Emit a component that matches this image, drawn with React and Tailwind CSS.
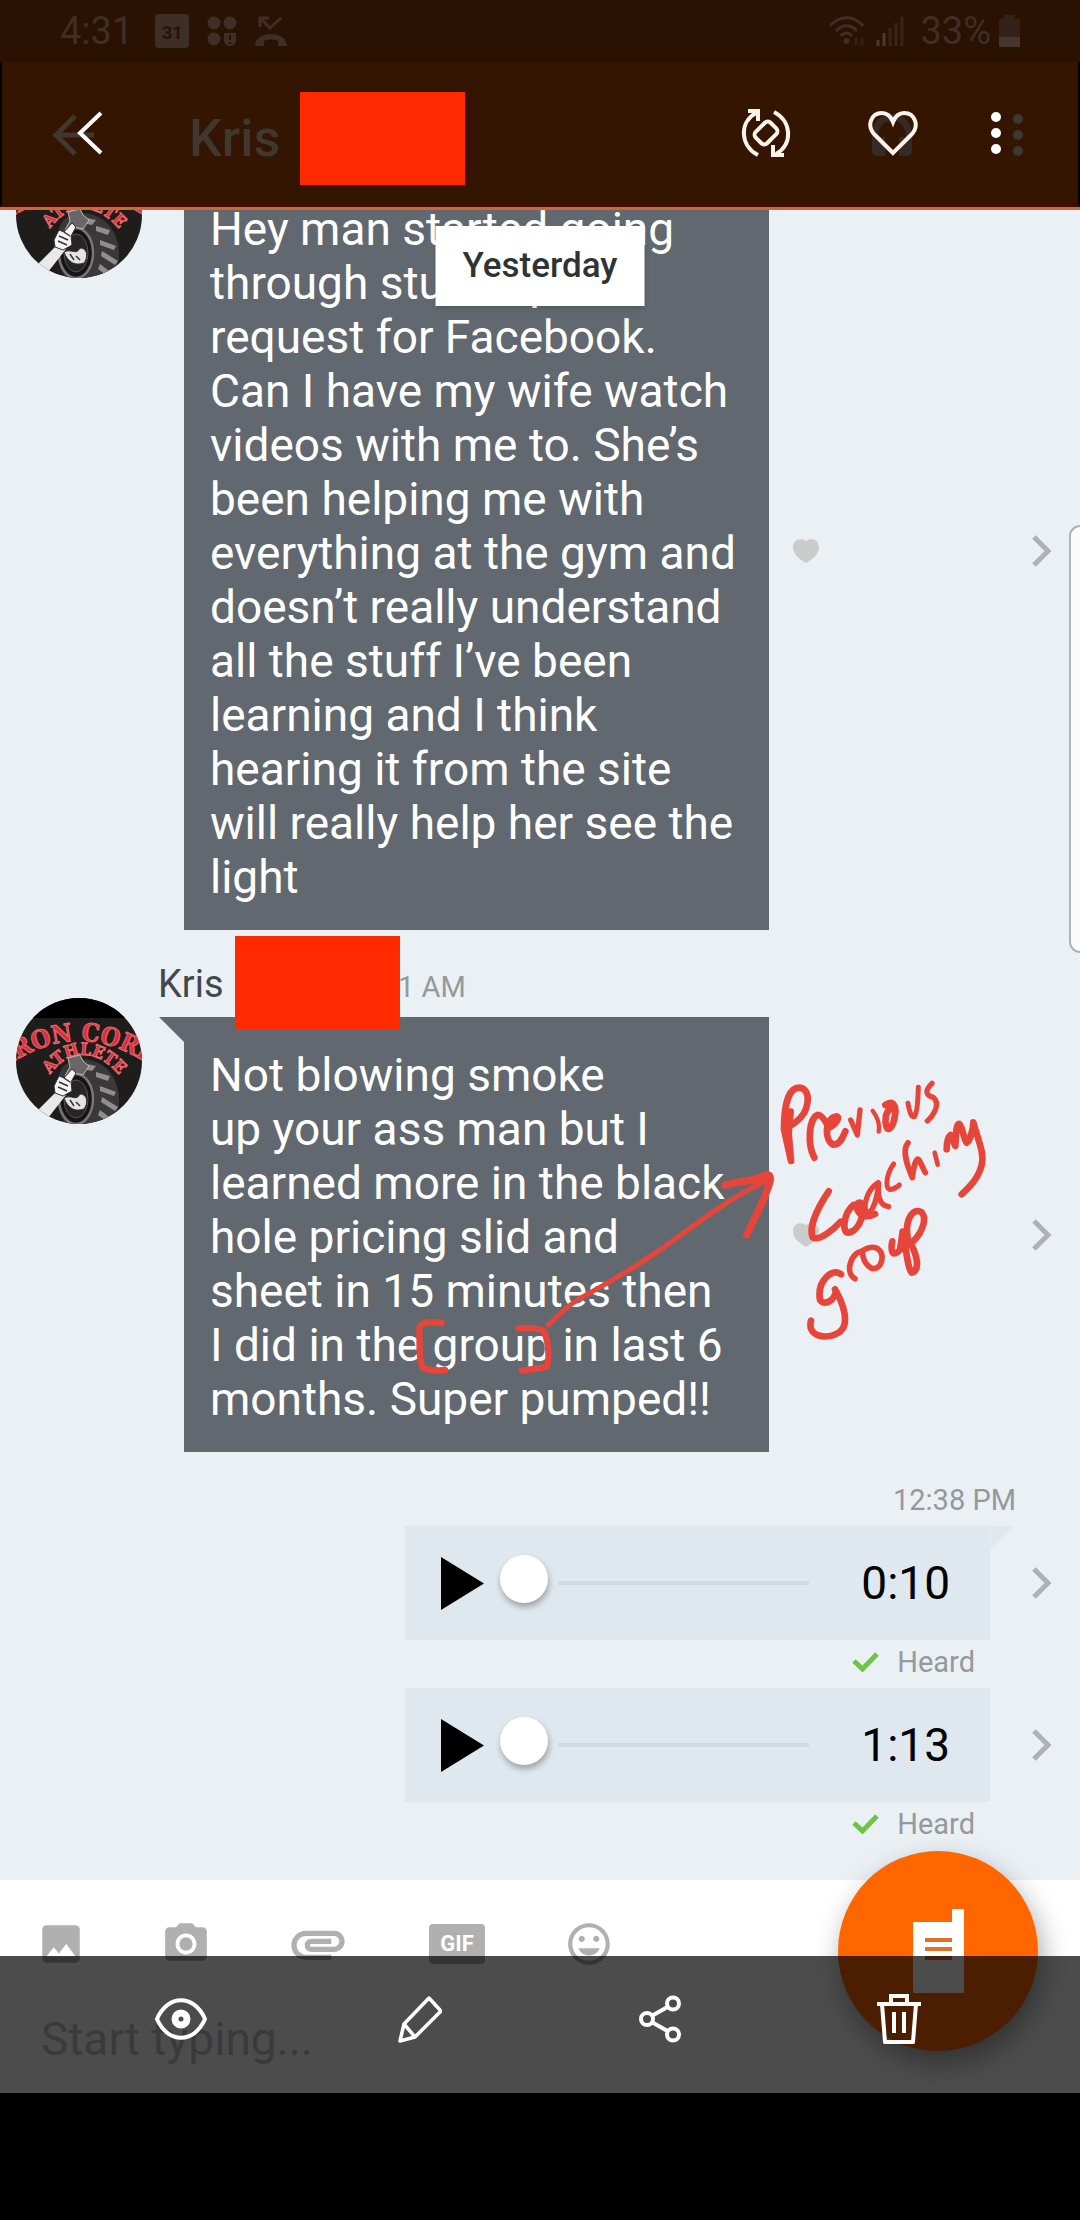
import { useState } from "react";
import {
  MdAttachment,
  MdImage,
  MdInsertEmoticon,
  MdPhotoCamera,
} from "react-icons/md";

const firstMessage = `Hey man started going
through stuff. Up
request for Facebook.
Can I have my wife watch
videos with me to. She’s
been helping me with
everything at the gym and
doesn’t really understand
all the stuff I’ve been
learning and I think
hearing it from the site
will really help her see the
light`;

const secondMessage = `Not blowing smoke
up your ass man but I
learned more in the black
hole pricing slid and
sheet in 15 minutes then
I did in the group in last 6
months. Super pumped!!`;

const Avatar = ({ id }) => (
  <svg viewBox="0 0 126 126" className="w-[126px] h-[126px] rounded-full" role="img" aria-label="Iron Core Athlete">
    <defs>
      <path id={`${id}-top`} d="M-30 84 Q18 43 63 43 Q108 43 156 84" />
      <path id={`${id}-sub`} d="M28 86 Q44 57 67 57 Q90 57 110 86" />
    </defs>
    <rect width="126" height="126" fill="#1f1c1c" />
    <rect width="126" height="20" fill="#000" />
    <g fontWeight="700" fill="#d8313c" stroke="#e8666c" strokeWidth="1" textAnchor="middle">
      <text fontSize="25" className="font-['DejaVu_Serif_Condensed','DejaVu_Serif',serif]">
        <textPath href={`#${id}-top`} startOffset="50%">IRON CORE</textPath>
      </text>
      <text fontSize="17" className="font-['DejaVu_Serif_Condensed','DejaVu_Serif',serif]">
        <textPath href={`#${id}-sub`} startOffset="50%">ATHLETE</textPath>
      </text>
    </g>
    {/* tyre */}
    <path d="M46 70 C56 58 78 58 92 72 C106 88 106 112 96 126 L50 126 C38 110 38 84 46 70Z" fill="#3a3838" />
    <path d="M62 64 l18 4 -4 5 -14 -3z M80 74 l14 4 -2 5 -12 -4z M84 88 l16 6 -2 4 -14 -5z M86 99 l16 10 -3 4 -14 -9z M84 112 l12 9 -3 4 -11 -8z" fill="#8f8d8d" />
    <ellipse cx="60" cy="101" rx="17" ry="25" fill="#161414" stroke="#777" strokeWidth="2.5" />
    <ellipse cx="60" cy="101" rx="12" ry="19" fill="#262424" stroke="#555" />
    {/* arm and hammer */}
    <path d="M52 60 l12 -3 3 6 6 5 -6 9 -8 -2 -4 6 -6 -3 5 -9z" fill="#686666" stroke="#bbb" />
    <path d="M22 112 L42 92 L50 97 L32 120Z" fill="#e9e9e9" />
    <path d="M38 88 L43 78 L48 80 L56 71 L60 75 L55 84 L56 93 L47 98 L39 95Z" fill="#f4f4f4" stroke="#333" />
    <path d="M43 84l9 4M42 89l9 4M48 80l6 4" stroke="#333" strokeWidth="1.5" />
    <path d="M48 100 C56 96 60 104 64 96 C72 96 72 106 68 111 C60 114 52 111 48 100Z" fill="#e4e4e4" stroke="#333" />
    <path d="M54 102l4 6M60 104l4 4" stroke="#333" strokeWidth="1.5" />
  </svg>
);

const Chevron = () => (
  <a href="#details" aria-label="Message details" className="mr-[28px]">
    <svg viewBox="0 0 20 32" className="w-5 h-8" fill="none" stroke="#aeb2b5" strokeWidth="5">
      <path d="M2 2 L16 16 L2 30" />
    </svg>
  </a>
);

const Redacted = () => <span className="block w-[165px] h-[93px] bg-[#ff2a00]" />;

const TextMessage = ({ id, text, tail, children }) => (
  <div className="relative flex">
    <div className="w-[184px] shrink-0 pl-4">
      <div className="-mt-[19px]">
        <Avatar id={id} />
      </div>
    </div>
    <div className="relative w-[585px] shrink-0 bg-[#61686f] px-[26px] pt-[31px] pb-[26px]">
      {tail && (
        <svg viewBox="0 0 25 25" className="absolute right-full top-0 w-[25px] h-[25px]">
          <path d="M0 0 H25 V25Z" fill="#61686f" />
        </svg>
      )}
      <p className="whitespace-pre text-[46px] leading-[54px] text-white">{text}</p>
    </div>
    <div className="flex flex-1 items-center justify-between pl-6">
      <button type="button" aria-label="Like">
        <svg viewBox="0 0 26 24" className="w-[26px] h-6" fill="#cacbcb">
          <path d="M13 24 C6 20 0 15 0 8 C0 0 9 -2 13 2.500 C17 -2 26 0 26 8 C26 15 20 20 13 24Z" />
        </svg>
      </button>
      <Chevron />
    </div>
    {children}
  </div>
);

const VoiceMessage = ({ duration, tail }) => {
  const [position, setPosition] = useState(0);

  return (
    <div>
      <div className="flex items-center justify-end">
        <div className="relative flex items-center w-[585px] h-[114px] bg-[#dfe7ef] pl-9 pr-10">
          <button type="button" aria-label="Play">
            <svg viewBox="0 0 43 53" className="w-[43px] h-[53px]">
              <path d="M0 0 L43 26.500 L0 53Z" />
            </svg>
          </button>
          <input
            type="range"
            aria-label="Position"
            value={position}
            onChange={(e) => setPosition(Number(e.target.value))}
            className="ml-4 min-w-0 flex-1 h-12 appearance-none bg-transparent [&::-webkit-slider-runnable-track]:h-1 [&::-webkit-slider-runnable-track]:bg-[linear-gradient(to_right,transparent_58px,#d1d9e1_58px)] [&::-webkit-slider-thumb]:appearance-none [&::-webkit-slider-thumb]:w-12 [&::-webkit-slider-thumb]:h-12 [&::-webkit-slider-thumb]:-mt-[26px] [&::-webkit-slider-thumb]:rounded-full [&::-webkit-slider-thumb]:bg-white [&::-webkit-slider-thumb]:shadow-[1px_4px_6px_rgba(0,0,0,0.3)]"
          />
          <span className="ml-[52px] text-[46px] leading-[54px] text-black">{duration}</span>
          {tail && (
            <svg viewBox="0 0 25 25" className="absolute left-full top-0 w-[25px] h-[25px]">
              <path d="M0 0 H25 L0 25Z" fill="#e2e8ee" />
            </svg>
          )}
        </div>
        <div className="flex justify-end w-[90px]">
          <Chevron />
        </div>
      </div>
      <div className="flex items-center justify-end gap-[18px] h-12 pb-1 pr-[105px] text-[29px] leading-8 text-[#96999c]">
        <svg viewBox="0 0 27 20" className="w-[27px] h-5" fill="none" stroke="#6cc644" strokeWidth="5">
          <path d="M2 9 L10.500 17 L25 2" />
        </svg>
        Heard
      </div>
    </div>
  );
};

// Pen strokes drawn over the second message
const Annotation = () => (
  <svg
    viewBox="90 -141 1770 930"
    className="pointer-events-none absolute left-[410px] top-[56px] w-[590px] h-[310px]"
    fill="none"
    stroke="#e8453a"
    strokeLinecap="round"
    strokeLinejoin="round"
  >
    <title>Previous coaching group</title>
    <path strokeWidth="15" d="M505 615 C530 590 560 558 600 535 C650 508 760 445 850 383 C950 310 1060 225 1165 180" />
    <path strokeWidth="22" d="M1034 196 C1080 180 1120 187 1160 163 C1185 165 1160 210 1150 240 L1100 345" />
    <path strokeWidth="14" d="M1036 190 L1140 184" />
    <path strokeWidth="19" d="M185 609 C150 604 120 605 118 625 C120 680 115 720 130 745 C150 750 175 752 195 750" />
    <path strokeWidth="19" d="M415 626 C450 620 490 625 495 640 C508 680 508 720 500 740 C480 745 450 748 425 752" />
    <g transform="translate(900 -240)" strokeWidth="20">
      {/* Previous */}
      <path d="M332 215 L326 280 L333 363 L312 268 C312 190 328 143 358 143 C395 145 392 215 345 248 L312 268" />
      <path d="M403 353 C380 310 388 235 412 225 C424 222 436 242 446 262" />
      <path d="M446 264 C474 250 482 225 465 230 C435 237 432 300 460 314 C480 315 488 292 496 274" />
      <path strokeWidth="16" d="M512 240 L532 285 L540 210" />
      <path strokeWidth="13" d="M578 212 C595 235 600 255 596 275" />
      <path d="M616 195 C640 178 650 200 645 225 C640 262 625 275 620 262 C612 240 618 215 630 208" />
      <path strokeWidth="15" d="M684 190 C688 215 694 232 703 230 C713 220 714 170 715 142" />
      <path strokeWidth="16" d="M756 130 C735 150 735 165 760 172 C782 190 762 225 742 243" />
      {/* coaching */}
      <path d="M446 454 C415 500 385 560 398 592 C415 605 460 570 482 545" />
      <path d="M520 495 C490 520 485 580 505 578 C540 575 562 500 542 488 C525 485 526 510 545 526 C560 530 575 528 585 522" />
      <path strokeWidth="16" d="M594 428 C560 450 548 500 560 518 C580 520 592 470 596 430 C592 470 600 497 626 500" />
      <path strokeWidth="15" d="M641 372 C620 400 615 440 628 448 C640 450 650 442 658 435" />
      <path strokeWidth="17" d="M684 308 C662 335 688 390 697 413 C700 380 708 355 715 358 C725 370 730 390 736 398" />
      <path strokeWidth="14" d="M764 338 L773 374" />
      <path d="M800 328 C800 300 805 290 812 285 L826 318 C828 270 830 250 838 252 C850 265 848 290 860 308 C870 300 880 270 880 247 C890 290 915 340 905 375 C895 415 870 440 845 463" />
      {/* group */}
      <path d="M483 703 C460 682 410 720 420 780 C440 805 475 765 465 748 C490 790 510 850 480 875 C440 902 380 890 393 842" />
      <path strokeWidth="17" d="M525 716 C495 700 510 640 545 634 C590 602 620 640 600 675 C575 705 550 665 548 642" />
      <path d="M637 604 C630 640 640 650 660 630 L668 575 C680 640 685 690 695 698 C722 690 712 640 684 598 C672 540 700 500 725 517 C745 540 720 590 690 612" />
    </g>
  </svg>
);

const StatusBar = () => (
  <div className="flex items-center justify-between h-[62px] bg-[#2a1101] px-[60px] text-[38px] leading-[42px] text-[#3f2e25]">
    <div className="flex items-center gap-[18px]">
      <span className="mr-1">4:31</span>
      <span className="flex items-end justify-center w-[34px] h-[34px] rounded-sm bg-[#3f2e25] pb-1 text-[18px] leading-[22px] font-bold text-[#2a1101]">
        31
      </span>
      <svg viewBox="0 0 30 30" className="w-[30px] h-[30px]" fill="#3f2e25">
        <circle cx="7" cy="7" r="6.500" />
        <circle cx="23" cy="7" r="6.500" />
        <circle cx="7" cy="23" r="6.500" />
        <path d="M17 17 H29 V24 C29 28 26 30 23 30 C20 30 17 28 17 24Z" />
        <path d="M23 19 v5 M23 26 v2" stroke="#2a1101" strokeWidth="2" />
      </svg>
      {/* missed call */}
      <svg viewBox="0 0 32 32" className="w-8 h-8" fill="#3f2e25">
        <path d="M5 12 V2 M4 3 H14 M6 4 L15 13 L26 3" fill="none" stroke="#3f2e25" strokeWidth="3" />
        <path d="M0 31 C0 15 32 15 32 31 H23 V26 C19 24 13 24 9 26 V31Z" />
      </svg>
    </div>
    <div className="flex items-center">
      <svg viewBox="0 0 40 32" className="w-10 h-8" fill="none" stroke="#3f2e25" strokeWidth="3">
        <path d="M2 11 C11 0 26 0 35 11 M8 16 C14 9 23 9 29 16 M13 21 C16 17 21 17 24 21" />
        <circle cx="18.500" cy="26" r="1.500" />
        <path d="M28 22 v8 M34 30 v-8" stroke="#33200f" />
      </svg>
      <svg viewBox="0 0 28 32" className="ml-2 mr-4 w-7 h-8" strokeWidth="3">
        <path d="M2 31 v-6 M8 31 v-13" stroke="#4a3a30" />
        <path d="M14 31 v-18 M20 31 v-23 M26 31 v-29" stroke="#37241a" />
      </svg>
      <span>33%</span>
      <svg viewBox="0 0 21 32" className="ml-2 w-[21px] h-8">
        <path d="M0 4 H5 V0 H16 V4 H21 V32 H0Z" fill="#34221a" />
        <path d="M0 22 H21 V32 H0Z" fill="#46362d" />
      </svg>
    </div>
  </div>
);

const AppHeader = () => (
  <header className="relative z-10 border-b-[3px] border-[#c46a3c]">
    <StatusBar />
    <div className="relative h-[145px] border-x-2 border-b-4 border-x-black border-b-[#3f0e00] bg-[#331502]">
      <div className="flex items-center h-[145px] pl-[50px] pr-[54px] text-[#40372f]">
        <svg viewBox="0 0 44 44" className="w-11 h-11 shrink-0" fill="none" stroke="#40372f" strokeWidth="5">
          <path d="M42 22 H5 M23 3 L4 22 L23 41" />
        </svg>
        <div className="flex items-center pt-2 pl-[93px]">
          <h1 className="w-[111px] text-[52px] leading-[60px] font-medium">Kris</h1>
          <Redacted />
        </div>
        <svg viewBox="0 0 40 44" className="ml-auto w-10 h-11" fill="#352b26">
          <path d="M0 22 C0 -6 40 -6 40 22 V38 Q40 43 35 43 H27 V24 H34 C34 2 6 2 6 24 H13 V43 H5 Q0 43 0 38Z" />
        </svg>
        <svg viewBox="0 0 12 44" className="ml-[100px] w-3 h-11" fill="#40372f">
          <circle cx="6" cy="6" r="5" />
          <circle cx="6" cy="22" r="5" />
          <circle cx="6" cy="38" r="5" />
        </svg>
      </div>
      {/* viewer controls lie over the chat header */}
      <div className="absolute inset-x-0 top-0 flex items-center h-[142px] pl-[74px] pr-[76px]">
        <a href="#back" aria-label="Back">
          <svg viewBox="0 0 28 44" className="w-7 h-11" fill="none" stroke="#fff" strokeWidth="4">
            <path d="M25 2 L4 22 L25 42" />
          </svg>
        </a>
        <button type="button" aria-label="Rotate" className="ml-auto">
          <svg viewBox="0 0 50 50" className="w-[50px] h-[50px]" fill="none" stroke="#fff3ec" strokeWidth="4">
            <path d="M17 47 C-1 38 -2 14 15 5" />
            <path d="M33 4 C51 13 52 37 35 46" />
            <path d="M7 3 H17 V13 M43 47 H32 V37" />
            <rect x="17" y="14.500" width="16" height="21" rx="4" transform="rotate(45 25 25)" />
          </svg>
        </button>
        <button type="button" aria-label="Favourite" className="ml-[77px]">
          <svg viewBox="0 0 50 46" className="w-[50px] h-[46px]" fill="none" stroke="#fff3ec" strokeWidth="4">
            <path d="M25 43 L7 25 C-2 16 3 3 14 3 C20 3 23 7 25 12 C27 7 30 3 36 3 C47 3 52 16 43 25Z" />
          </svg>
        </button>
        <button type="button" aria-label="More options" className="ml-[72px]">
          <svg viewBox="0 0 12 44" className="w-3 h-11" fill="#fff">
            <circle cx="6" cy="6" r="5" />
            <circle cx="6" cy="22" r="5" />
            <circle cx="6" cy="38" r="5" />
          </svg>
        </button>
      </div>
    </div>
  </header>
);

const Composer = () => (
  <footer className="relative h-[213px] bg-white">
    <div className="flex items-center gap-[75px] pt-8 pl-9 text-[#b0b0b0]">
      <button type="button" aria-label="Image"><MdImage size={50} /></button>
      <button type="button" aria-label="Camera"><MdPhotoCamera size={50} /></button>
      <button type="button" aria-label="Attachment"><MdAttachment size={64} /></button>
      <button type="button" className="mx-1 w-14 h-10 rounded-sm bg-[#b0b0b0] text-[22px] leading-10 font-bold text-white">
        GIF
      </button>
      <button type="button" aria-label="Emoji"><MdInsertEmoticon size={50} /></button>
    </div>
    <input
      type="text"
      aria-label="Message"
      placeholder="Start typing..."
      className="mt-7 ml-[41px] w-[600px] h-[70px] text-[46px] placeholder:text-[#c4c4c4] placeholder:opacity-100 outline-none"
    />
    <button
      type="button"
      aria-label="Walkie-talkie"
      className="absolute -top-[29px] right-[42px] w-[200px] h-[200px] rounded-full bg-[#ff6600] shadow-[4px_12px_28px_rgba(0,0,0,0.35)]"
    >
      <svg viewBox="0 0 200 200" className="w-[200px] h-[200px]">
        <path d="M76 71 H114 V58 H126 V140 Q126 142 124 142 H77 Q75 142 75 140 V72Z" fill="#fff" />
        <path d="M87 89 H114 M87 98 H114 M87 107 H114" stroke="#e0702c" strokeWidth="4" />
      </svg>
    </button>
    <nav className="absolute inset-x-0 bottom-0 flex h-[137px] bg-black/70 px-[61px] pb-3">
      <button type="button" aria-label="View" className="flex flex-1 items-center justify-center">
        <svg viewBox="0 0 54 42" className="w-[54px] h-[42px]" fill="none" stroke="#fff" strokeWidth="4">
          <path d="M3 21 C14 -4 40 -4 51 21 C40 46 14 46 3 21Z" />
          <circle cx="27" cy="21" r="6" strokeWidth="7" />
        </svg>
      </button>
      <button type="button" aria-label="Edit" className="flex flex-1 items-center justify-center">
        <svg viewBox="0 0 46 48" className="w-[46px] h-12" fill="none" stroke="#fff" strokeWidth="3.500" strokeLinejoin="round">
          <path d="M32 3 L43 15 Q44 17 42 18 L18 42 L3 46 L7 29Z M7 29 L18 42" />
        </svg>
      </button>
      <button type="button" aria-label="Share" className="flex flex-1 items-center justify-center">
        <svg viewBox="0 0 42 48" className="w-[42px] h-12" fill="none" stroke="#fff" strokeWidth="4">
          <circle cx="8" cy="24" r="6" />
          <circle cx="34" cy="8.500" r="6" />
          <circle cx="34" cy="39.500" r="6" />
          <path d="M13.500 20.500 L28.500 12 M13.500 27.500 L28.500 36" />
        </svg>
      </button>
      <button type="button" aria-label="Delete" className="flex flex-1 items-center justify-center">
        <svg viewBox="0 0 44 52" className="w-11 h-[52px]" fill="none" stroke="#fff" strokeWidth="4">
          <path d="M0 11 H44 M14 11 V3 H30 V11" />
          <path d="M5 11 L8 49 H36 L39 11" strokeLinejoin="round" />
          <path d="M17 19 V40 M27 19 V40" />
        </svg>
      </button>
    </nav>
  </footer>
);

const App = () => {
  return (
    <div className="min-h-screen overflow-x-hidden bg-black font-[Roboto,sans-serif]">
      <AppHeader />
      <main className="relative overflow-hidden bg-[#ebf0f4] pb-[30px]">
        <div className="-mt-[39px]">
          <TextMessage id="first" text={firstMessage} />
          <div className="relative z-10 flex items-baseline h-[87px] pt-[31px] pl-[158px]">
            <h2 className="w-[240px] text-[38px] leading-[46px] text-[#42474c]">Kris</h2>
            <time className="text-[29px] leading-8 text-[#96999c]">1 AM</time>
            <div className="absolute left-[235px] -bottom-3">
              <Redacted />
            </div>
          </div>
          <TextMessage id="second" text={secondMessage} tail>
            <Annotation />
          </TextMessage>
          <div className="flex items-end justify-end h-[74px] pb-[10px] pr-16 text-[29px] leading-8 text-[#96999c]">
            <time>12:38 PM</time>
          </div>
          <VoiceMessage duration="0:10" tail />
          <VoiceMessage duration="1:13" />
        </div>
        <div className="absolute left-1/2 top-4 -translate-x-1/2 bg-white px-[27px] py-5 text-[35px] leading-10 font-medium text-[#303336] shadow-md">
          Yesterday
        </div>
        {/* edge panel handle */}
        <div className="absolute right-0 top-[315px] w-[11px] h-[428px] rounded-l-[14px] border-2 border-r-0 border-[#b0b3b5] bg-[#fafbfc]" />
      </main>
      <Composer />
    </div>
  );
};

export default App;
